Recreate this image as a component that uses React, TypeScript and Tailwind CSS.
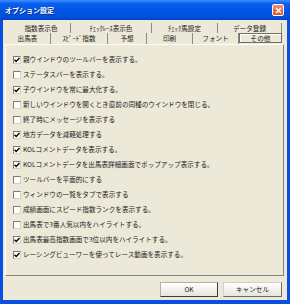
import React from "react";

const rowTop = [
  { label: "指数表示色", w: 59 },
  { label: "ﾁｪｯｸﾚｰｽ表示色", w: 81 },
  { label: "ﾁｪｯｸ馬設定", w: 66 },
  { label: "データ登録", w: 64 },
];

const rowBottom = [
  { label: "出馬表", w: 46 },
  { label: "ｽﾋﾟｰﾄﾞ指数", w: 57 },
  { label: "予想", w: 39 },
  { label: "印刷", w: 46 },
  { label: "フォント", w: 46 },
];

const options: [boolean, string][] = [
  [true, "親ウインドウのツールバーを表示する。"],
  [false, "ステータスバーを表示する。"],
  [true, "子ウインドウを常に最大化する。"],
  [false, "新しいウインドウを開くとき直前の同種のウインドウを閉じる。"],
  [false, "終了時にメッセージを表示する"],
  [true, "地方データを減軽処理する"],
  [true, "KOLコメントデータを表示する。"],
  [true, "KOLコメントデータを出馬表詳細画面でポップアップ表示する。"],
  [false, "ツールバーを平面的にする"],
  [false, "ウィンドウの一覧をタブで表示する"],
  [false, "成績画面にスピード指数ランクを表示する。"],
  [false, "出馬表で3番人気以内をハイライトする。"],
  [true, "出馬表最高指数画面で3位以内をハイライトする。"],
  [true, "レーシングビューワーを使ってレース動画を表示する。"],
];

function CheckBox({ checked }: { checked: boolean }) {
  return (
    <div className="w-[8px] h-[8px] shrink-0 bg-white border border-t-[#7A7A7A] border-l-[#7A7A7A] border-r-[#D4D0C8] border-b-[#D4D0C8] flex items-center justify-center">
      {checked && (
        <svg width="6" height="6" viewBox="0 0 6 6">
          <path d="M0.5 2.8 L2.2 4.5 L5.5 1" stroke="#000" strokeWidth="1.4" fill="none" />
        </svg>
      )}
    </div>
  );
}

export default function App() {
  return (
    <div
      className="w-[290px] h-[304px] flex flex-col bg-[#0A50E0] text-[#1A1A1A]"
      style={{ fontFamily: '"Noto Sans CJK JP", "Noto Sans", sans-serif' }}
    >
      {/* title bar */}
      <div className="h-[20px] shrink-0 flex items-center justify-between pl-[5px] pr-[6px] bg-[linear-gradient(to_bottom,#3D8EFF_0%,#0A5EEE_18%,#0055E5_55%,#0050DA_85%,#0043C8_100%)]">
        <span className="text-white font-bold text-[7px] leading-none [text-shadow:1px_1px_0_#0A2A80]">オプション設定</span>
        <div className="w-[12px] h-[12px] rounded-[2px] border border-white bg-[linear-gradient(to_bottom,#F09070,#E0502A)] flex items-center justify-center">
          <svg width="7" height="7" viewBox="0 0 7 7">
            <path d="M1 1 L6 6 M6 1 L1 6" stroke="#fff" strokeWidth="1.5" />
          </svg>
        </div>
      </div>

      {/* client */}
      <div className="flex-1 mx-[3px] mb-[4px] bg-[#ECE9D8] flex flex-col text-[6.6px] leading-none">
        <div className="h-[24px] shrink-0 flex flex-col pt-[3px]">
          <div className="h-[10px] flex ml-[9px]">
            {rowTop.map((t) => (
              <div
                key={t.label}
                className="h-full flex items-center justify-center border-r border-[#8A8A8A]"
                style={{ width: t.w }}
              >
                {t.label}
              </div>
            ))}
          </div>
          <div className="h-[11px] flex ml-[2px]">
            {rowBottom.map((t) => (
              <div
                key={t.label}
                className="h-full flex items-center justify-center border-r border-[#8A8A8A]"
                style={{ width: t.w }}
              >
                {t.label}
              </div>
            ))}
            <div className="w-[43px] h-[10px] flex items-center justify-center border border-[#6E6E6E] shadow-[inset_1px_1px_0_#fff]">
              その他
            </div>
          </div>
        </div>

        {/* panel */}
        <div className="h-[232px] shrink-0 ml-[2px] mr-[3px] border border-t-white border-l-white border-r-[#808080] border-b-[#808080] pt-[7px] pl-[7px]">
          {options.map(([checked, label]) => (
            <div key={label} className="h-[15px] flex items-center gap-[2px]">
              <CheckBox checked={checked} />
              <span className="whitespace-nowrap">{label}</span>
            </div>
          ))}
        </div>

        <div className="flex justify-end gap-[5px] mt-[6px] mr-[5px]">
          <button className="w-[58px] h-[15px] flex items-center justify-center bg-[linear-gradient(to_bottom,#FFFFFF,#E6E4DC)] border border-[#3A3A3A] border-t-[#B0B0B0] border-l-[#B0B0B0] text-[6.6px] text-[#222]">
            OK
          </button>
          <button className="w-[59px] h-[15px] flex items-center justify-center bg-[linear-gradient(to_bottom,#FFFFFF,#E6E4DC)] border border-[#6A6A6A] border-t-[#D0D0D0] border-l-[#D0D0D0] text-[6.6px] text-[#222]">
            キャンセル
          </button>
        </div>
      </div>
    </div>
  );
}
